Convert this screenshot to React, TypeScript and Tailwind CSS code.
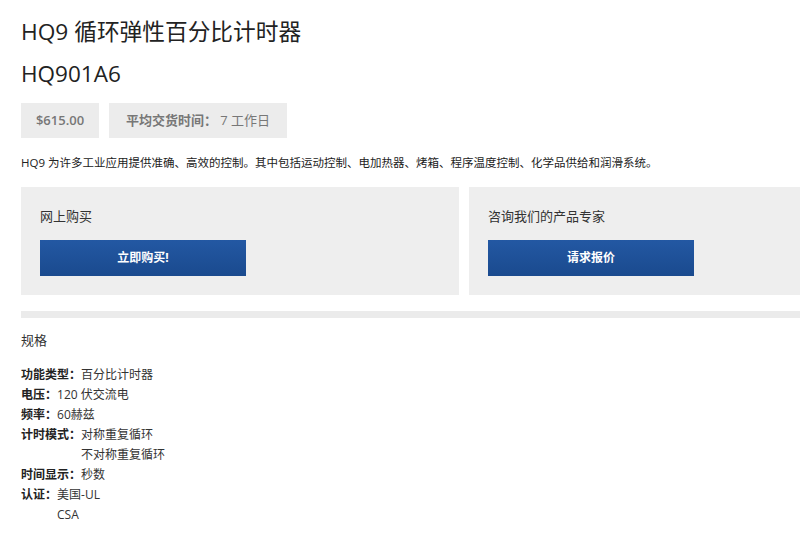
export default function App() {
  const specs: [string, string[]][] = [
    ["功能类型：", ["百分比计时器"]],
    ["电压：", ["120 伏交流电"]],
    ["频率：", ["60赫兹"]],
    ["计时模式：", ["对称重复循环", "不对称重复循环"]],
    ["时间显示：", ["秒数"]],
    ["认证：", ["美国-UL", "CSA"]],
  ]

  return (
    <div
      className="min-h-[550px] w-[800px] overflow-hidden bg-white pl-[21px] text-[#333]"
      style={{ fontFamily: '"Open Sans", "Noto Sans CJK SC", sans-serif' }}
    >
      <h1 className="pt-[17px] text-[22.7px] leading-[30px] text-[#222]">HQ9 循环弹性百分比计时器</h1>
      <h2 className="mt-[14px] text-[22.5px] leading-[26px] text-[#222]">HQ901A6</h2>

      <div className="mt-[16px] flex gap-[10px] text-[13px] text-[#777]">
        <div className="flex h-[35px] w-[78px] items-center justify-center bg-[#ececec] font-semibold">$615.00</div>
        <div className="flex h-[35px] w-[178px] items-center justify-center bg-[#ececec]">
          <span className="font-semibold">平均交货时间：</span>
          <span>&nbsp;7 工作日</span>
        </div>
      </div>

      <p className="mt-[16px] text-[11.5px] leading-[18px] text-[#222]">
        HQ9 为许多工业应用提供准确、高效的控制。其中包括运动控制、电加热器、烤箱、程序温度控制、化学品供给和润滑系统。
      </p>

      <div className="mt-[15px] flex gap-[10px]">
        <div className="h-[108px] w-[438px] shrink-0 bg-[#eeeeee] px-[19px] pt-[19px]">
          <div className="text-[13px] leading-[20px] text-[#333]">网上购买</div>
          <button className="mt-[14px] flex h-[36px] w-[206px] items-center justify-center bg-gradient-to-b from-[#2358a3] to-[#1a4a8e] text-[12px] font-bold text-white">
            立即购买!
          </button>
        </div>
        <div className="h-[108px] flex-1 bg-[#eeeeee] px-[19px] pt-[19px]">
          <div className="text-[13px] leading-[20px] text-[#333]">咨询我们的产品专家</div>
          <button className="mt-[14px] flex h-[36px] w-[206px] items-center justify-center bg-gradient-to-b from-[#2358a3] to-[#1a4a8e] text-[12px] font-bold text-white">
            请求报价
          </button>
        </div>
      </div>

      <div className="mt-[16px] h-[7px] bg-[#ebebeb]" />

      <div className="mt-[12px] text-[13px] leading-[20px] text-[#333]">规格</div>

      <div className="mt-[15px] text-[12px] leading-[20px] text-[#333]">
        {specs.map(([label, values]) => (
          <div key={label} className="flex">
            <span className="font-bold text-[#222]">{label}</span>
            <div>
              {values.map((v) => (
                <div key={v}>{v}</div>
              ))}
            </div>
          </div>
        ))}
      </div>
    </div>
  )
}
